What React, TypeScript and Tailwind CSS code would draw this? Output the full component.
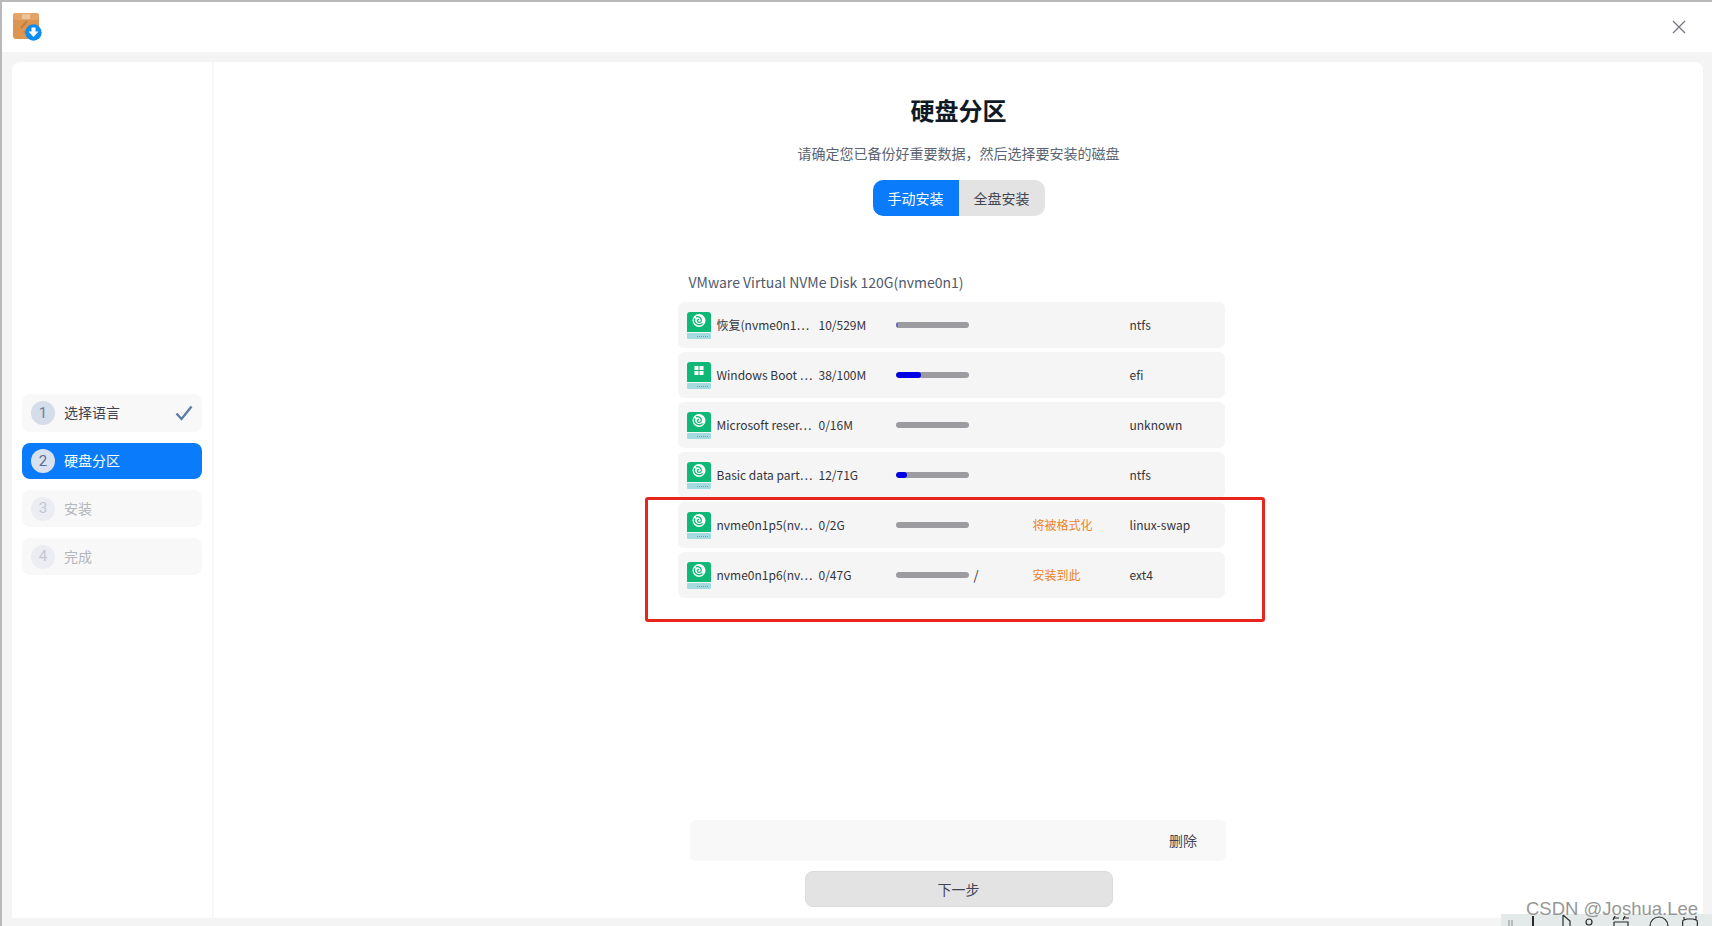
import React from "react";

function AppIcon() {
  return (
    <svg width="29" height="28" viewBox="0 0 29 28" fill="none">
      <rect x="0" y="0" width="26" height="26" rx="3" fill="#dc9651" />
      <rect x="0" y="0" width="26" height="7" rx="3" fill="#e2a468" />
      <rect x="9" y="1" width="8" height="5" fill="#ecc49a" />
      <path d="M8 15l6-7M11 20l6-7" stroke="#c27f42" strokeWidth="2" />
      <circle cx="20.5" cy="19.5" r="8.2" fill="#0d8cf2" />
      <path d="M18.5 14.5h4v4h3l-5 5.5-5-5.5h3z" fill="#ffffff" />
    </svg>
  );
}

function DiskIcon({ kind }: { kind: "deepin" | "windows" }) {
  return (
    <svg width="24" height="27" viewBox="0 0 24 27" fill="none" className="shrink-0">
      <path d="M3 0h18a3 3 0 0 1 3 3v17H0V3a3 3 0 0 1 3-3z" fill="#10b877" />
      <rect x="0" y="21" width="24" height="6" rx="1" fill="#a3dbe0" />
      <path d="M10 24.5h12" stroke="#6f97e8" strokeWidth="1.2" strokeDasharray="1 1" />
      {kind === "deepin" ? (
        <g>
          <circle cx="12" cy="8.5" r="6.5" fill="#ffffff" />
          <path
            d="M9 4.8c3.4-.6 6 1.8 5.2 4.2-.7 1.9-3.6 1.8-3.8 0-.1-1 .8-1.7 1.7-1.4M15.6 11.5c-2.6 2.2-7 1.4-8-1.8-.4-1.2-.3-2.3.2-3.3"
            stroke="#10b877"
            strokeWidth="1.3"
            fill="none"
          />
        </g>
      ) : (
        <g fill="#ffffff">
          <rect x="7.5" y="4" width="4" height="4" />
          <rect x="12.5" y="4" width="4" height="4" />
          <rect x="7.5" y="9" width="4" height="4" />
          <rect x="12.5" y="9" width="4" height="4" />
        </g>
      )}
    </svg>
  );
}

type Row = {
  name: string;
  size: string;
  fill: number;
  fillClass: string;
  mount?: string;
  status?: string;
  fs: string;
  kind: "deepin" | "windows";
};

const rows: Row[] = [
  { name: "恢复(nvme0n1…", size: "10/529M", fill: 2, fillClass: "bg-[#6a6ac8]", fs: "ntfs", kind: "deepin" },
  { name: "Windows Boot …", size: "38/100M", fill: 25, fillClass: "bg-[#0000e6]", fs: "efi", kind: "windows" },
  { name: "Microsoft reser…", size: "0/16M", fill: 0, fillClass: "bg-[#0000e6]", fs: "unknown", kind: "deepin" },
  { name: "Basic data part…", size: "12/71G", fill: 11, fillClass: "bg-[#0000e6]", fs: "ntfs", kind: "deepin" },
  { name: "nvme0n1p5(nv…", size: "0/2G", fill: 0, fillClass: "bg-[#0000e6]", status: "将被格式化", fs: "linux-swap", kind: "deepin" },
  { name: "nvme0n1p6(nv…", size: "0/47G", fill: 0, fillClass: "bg-[#0000e6]", mount: "/", status: "安装到此", fs: "ext4", kind: "deepin" },
];

function PartitionRow({ row }: { row: Row }) {
  return (
    <div className="flex h-[46px] items-center rounded-md bg-[#f5f5f5] pl-[9px] text-[12px] text-[#33343a]">
      <DiskIcon kind={row.kind} />
      <div className="ml-[6px] w-[102px] whitespace-nowrap">{row.name}</div>
      <div className="w-[77px]">{row.size}</div>
      <div className="h-[6px] w-[73px] overflow-hidden rounded-full bg-[#9b9ba0]">
        <div className={`h-full rounded-full ${row.fillClass}`} style={{ width: row.fill }} />
      </div>
      <div className="ml-[5px] w-[59px] text-[13px]">{row.mount}</div>
      <div className="w-[97px] text-[#ec8228]">{row.status}</div>
      <div>{row.fs}</div>
    </div>
  );
}

function Step({ n, label, state }: { n: number; label: string; state: "done" | "active" | "todo" }) {
  const box =
    state === "active"
      ? "bg-[#0a7cfb] text-white h-[36px]"
      : state === "done"
        ? "bg-[#f8f8f9] text-[#414552] h-[38px]"
        : "bg-[#f8f8f9] text-[#b4b5ba] h-[37px]";
  const circle =
    state === "active" ? "bg-[#d9e1ee] text-[#5a6f97]" : state === "done" ? "bg-[#d5dcea] text-[#6c7ea0]" : "bg-[#ebedf3] text-[#c2c7d4]";
  return (
    <div className={`flex items-center rounded-lg pl-[9px] pr-[9px] ${box}`}>
      <div className={`flex h-[24px] w-[24px] items-center justify-center rounded-full font-['Roboto',sans-serif] text-[15px] ${circle}`}>{n}</div>
      <div className="ml-[9px] flex-1 pb-[1px] text-[14px]">{label}</div>
      {state === "done" && (
        <svg width="18" height="16" viewBox="0 0 18 16" fill="none">
          <path d="M1.5 8.5l5 5.5L16.5 1.5" stroke="#5f7ba8" strokeWidth="2.4" />
        </svg>
      )}
    </div>
  );
}

export default function App() {
  return (
    <div className="relative flex h-[926px] w-[1712px] flex-col overflow-hidden border-l-2 border-t-2 border-[#b9b9b9] bg-[#f4f4f4] font-['Noto_Sans_CJK_SC','Noto_Sans',sans-serif]">
      <header className="flex h-[50px] shrink-0 items-center justify-between bg-white pl-[11px] pr-[26px]">
        <AppIcon />
        <svg width="14" height="14" viewBox="0 0 14 14" fill="none">
          <path d="M1 1l12 12M13 1L1 13" stroke="#75767e" strokeWidth="1.3" />
        </svg>
      </header>

      <div className="flex flex-1 pb-[8px] pl-[10px] pr-[9px] pt-[10px]">
        <div className="flex flex-1 rounded-t-lg bg-white">
          <aside className="flex w-[202px] flex-col gap-[11px] border-r-2 border-[#f8f8f8] pl-[10px] pr-[10px] pt-[332px]">
            <Step n={1} label="选择语言" state="done" />
            <Step n={2} label="硬盘分区" state="active" />
            <Step n={3} label="安装" state="todo" />
            <Step n={4} label="完成" state="todo" />
          </aside>

          <main className="flex flex-1 flex-col items-center pt-[32px]">
            <h1 className="text-[24px] leading-[32px] font-bold text-[#101a26]">硬盘分区</h1>
            <p className="mt-[16px] text-[14px] leading-[22px] text-[#5b6472]">请确定您已备份好重要数据，然后选择要安装的磁盘</p>
            <div className="mt-[16px] flex h-[36px] w-[172px] overflow-hidden rounded-[10px] text-[14px]">
              <div className="flex w-[86px] items-center justify-center bg-[#0a7cfb] text-white">手动安装</div>
              <div className="flex w-[86px] items-center justify-center bg-[#e3e3e3] text-[#414552]">全盘安装</div>
            </div>

            <div className="ml-[-15px] mt-[55px] w-[547px]">
              <div className="pl-[11px] text-[14px] leading-[22px] text-[#4f5a6b]">VMware Virtual NVMe Disk 120G(nvme0n1)</div>
              <div className="mt-[9px] flex flex-col gap-[4px]">
                {rows.map((r) => (
                  <PartitionRow key={r.name} row={r} />
                ))}
              </div>
            </div>

            <div className="mt-auto ml-[-1px] flex h-[41px] w-[536px] items-center justify-end rounded-md bg-[#f8f8f8] pr-[29px] text-[14px] text-[#414552]">删除</div>
            <button className="mb-[11px] mt-[10px] h-[36px] w-[308px] rounded-lg border border-[#dadada] bg-[#e3e3e3] text-[14px] text-[#414552]">下一步</button>
          </main>
        </div>
      </div>

      <div className="absolute left-[643px] top-[495px] h-[125px] w-[620px] rounded-[3px] border-[3px] border-[#e8251c]" />

      <div className="absolute left-[1499px] top-[912px] h-[14px] w-[213px] overflow-hidden bg-[#e4eaea]">
        <svg width="213" height="14" viewBox="0 0 213 14" fill="none" stroke="#2a2a2a" strokeWidth="1.2">
          <path d="M8 6v8M11 6v8" stroke="#9a9a9a" />
          <path d="M32 2v12" strokeWidth="2" />
          <path d="M62 1l7 6v7M62 1v13" />
          <circle cx="88" cy="8" r="3" />
          <path d="M112 4h6M122 4h6M114 2l-2 4M124 2l-2 4M113 8h14v6M113 8v6" />
          <circle cx="158" cy="12" r="9" />
          <path d="M183 3v3l3-1h6l3 1V2M182 6c-1 5 0 8 1 8M196 6c1 5 0 8-1 8" />
        </svg>
      </div>
      <div className="absolute left-[1524px] top-[896px] font-['Liberation_Sans',sans-serif] text-[18.5px] leading-[22px] text-[#979797]">CSDN @Joshua.Lee</div>
    </div>
  );
}
